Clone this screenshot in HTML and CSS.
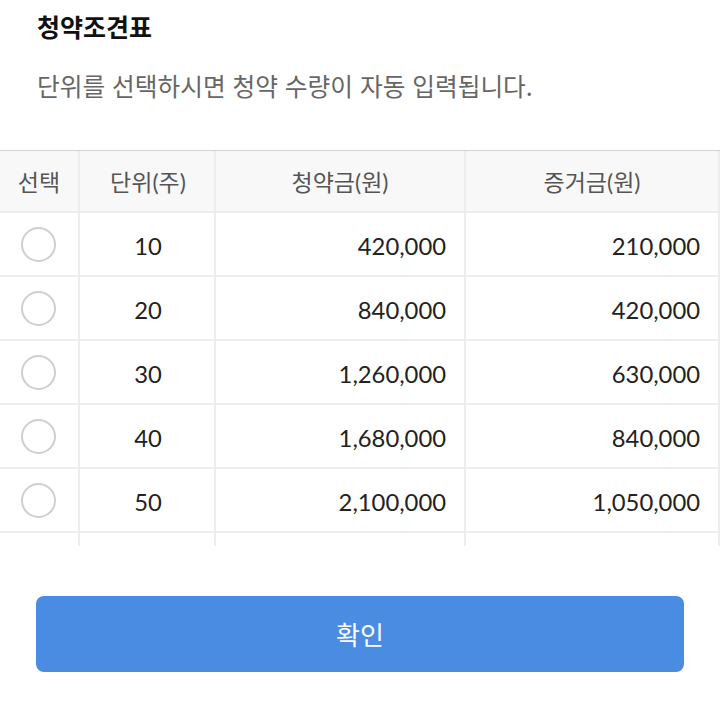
FILE: index.html
```html
<!DOCTYPE html>
<html lang="ko">
<head>
<meta charset="utf-8">
<title>청약조견표</title>
<link rel="stylesheet" href="styles.css">
</head>
<body>
<div class="page">
  <header class="intro">
    <h1 class="title">청약조견표</h1>
    <p class="desc">단위를 선택하시면 청약 수량이 자동 입력됩니다.</p>
  </header>
  <div class="table-wrap">
    <table class="grid">
      <thead>
        <tr>
          <th class="c-sel">선택</th>
          <th class="c-unit">단위(주)</th>
          <th class="c-amt">청약금(원)</th>
          <th class="c-dep">증거금(원)</th>
        </tr>
      </thead>
      <tbody>
        <tr><td class="c-sel"><span class="radio"></span></td><td class="c-unit">10</td><td class="num">420,000</td><td class="num">210,000</td></tr>
        <tr><td class="c-sel"><span class="radio"></span></td><td class="c-unit">20</td><td class="num">840,000</td><td class="num">420,000</td></tr>
        <tr><td class="c-sel"><span class="radio"></span></td><td class="c-unit">30</td><td class="num">1,260,000</td><td class="num">630,000</td></tr>
        <tr><td class="c-sel"><span class="radio"></span></td><td class="c-unit">40</td><td class="num">1,680,000</td><td class="num">840,000</td></tr>
        <tr><td class="c-sel"><span class="radio"></span></td><td class="c-unit">50</td><td class="num">2,100,000</td><td class="num">1,050,000</td></tr>
        <tr><td class="c-sel"><span class="radio"></span></td><td class="c-unit">60</td><td class="num">2,520,000</td><td class="num">1,260,000</td></tr>
      </tbody>
    </table>
  </div>
  <div class="actions">
    <button class="confirm" type="button">확인</button>
  </div>
</div>
</body>
</html>
```

FILE: styles.css
```css
* { box-sizing: border-box; }

html, body {
  margin: 0;
  padding: 0;
  background: #ffffff;
}

body {
  font-family: Lato, "Noto Sans CJK KR", "Noto Sans", sans-serif;
  color: #222222;
}

.page {
  width: 720px;
}

.intro {
  padding: 10px 37px 0;
  height: 150px;
}

.title {
  margin: 0;
  font-family: "Noto Sans CJK KR", "Noto Sans", sans-serif;
  font-size: 25px;
  line-height: 32px;
  font-weight: 700;
  color: #111111;
}

.desc {
  margin: 27px 0 0;
  font-family: "Noto Sans CJK KR", "Noto Sans", sans-serif;
  font-size: 24.7px;
  line-height: 32px;
  font-weight: 400;
  color: #666666;
  white-space: nowrap;
}

.table-wrap {
  height: 396px;
  overflow: hidden;
  border-top: 1px solid #d2d2d2;
}

.grid {
  width: 720px;
  border-collapse: separate;
  border-spacing: 0;
  table-layout: fixed;
}

.grid th,
.grid td {
  border-right: 2px solid #ededed;
  border-bottom: 2px solid #ededed;
  padding: 0;
}

.grid th {
  height: 62px;
  background: #f8f8f8;
  font-size: 23px;
  font-weight: 400;
  color: #555555;
  text-align: center;
}

.grid td {
  height: 64px;
  padding-top: 3px;
  font-size: 23.8px;
  color: #222222;
}

.grid td.c-sel { padding-top: 0; }

.c-sel { width: 80px; text-align: center; }
.c-unit { width: 136px; text-align: center; padding-left: 2px !important; }
.c-amt { width: 250px; }
.c-dep { width: 254px; }

.num {
  text-align: right;
  padding-right: 18px !important;
}

.radio {
  display: inline-block;
  width: 35px;
  height: 35px;
  border: 2px solid #cfcfcf;
  border-radius: 50%;
  vertical-align: middle;
  margin-right: 2px;
}

.actions {
  padding: 50px 36px 0;
}

.confirm {
  display: block;
  width: 648px;
  height: 76px;
  border: none;
  border-radius: 8px;
  background: #4a8ce1;
  color: #ffffff;
  font-family: "Noto Sans CJK KR", "Noto Sans", sans-serif;
  font-size: 26px;
  line-height: 1;
  font-weight: 400;
  padding: 0;
  cursor: pointer;
}
```
